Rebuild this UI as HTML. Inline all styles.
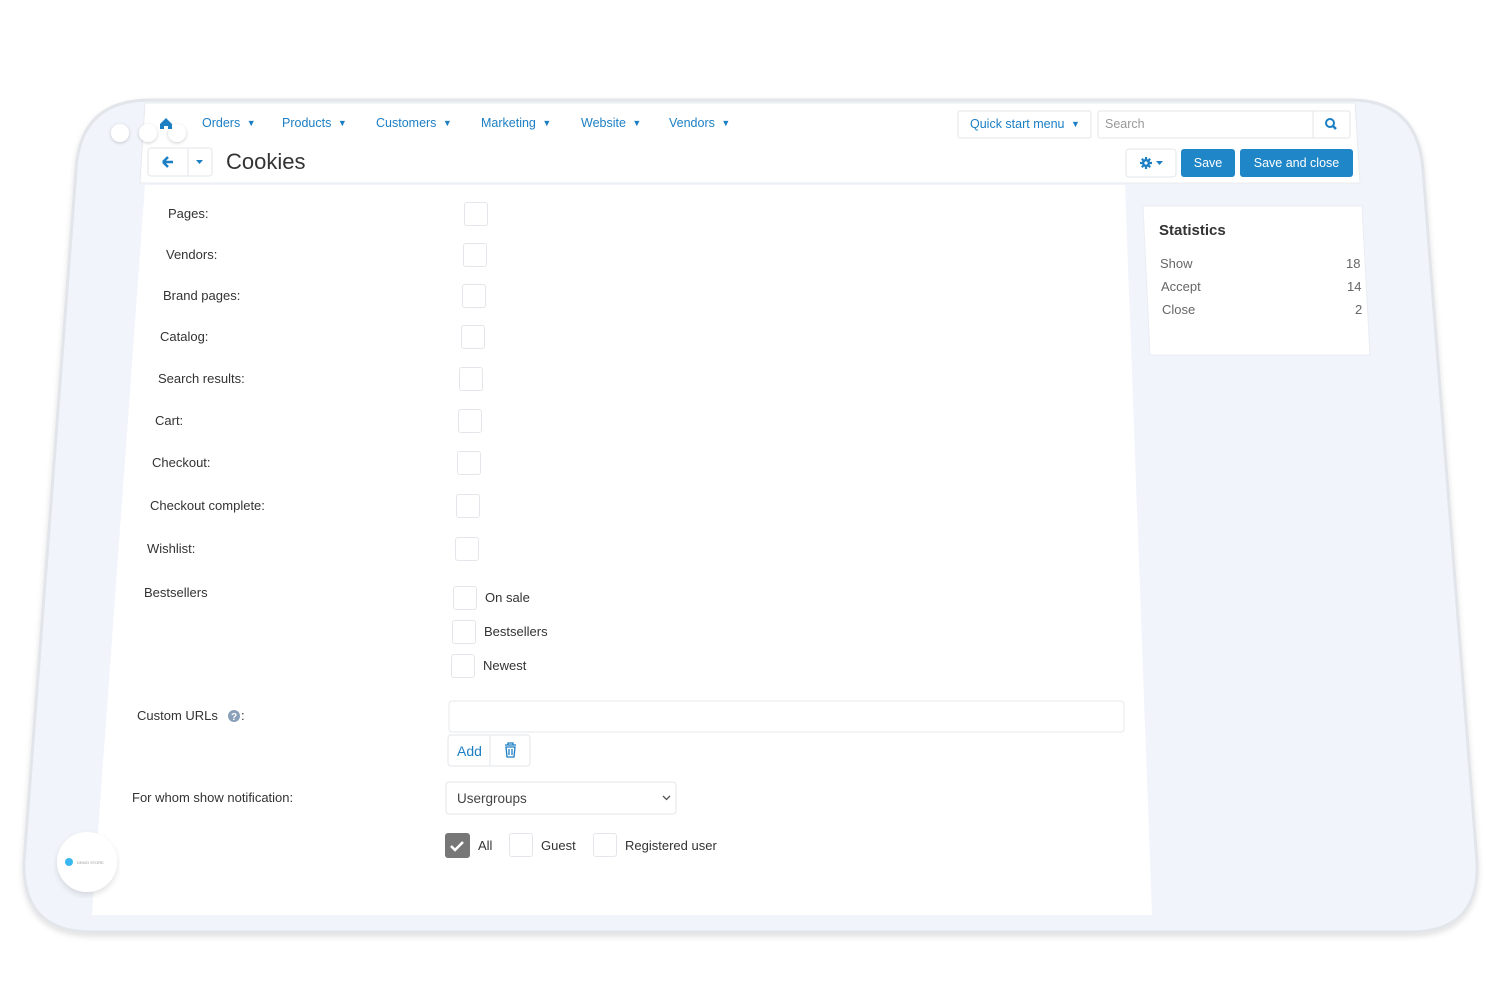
<!DOCTYPE html>
<html><head><style>
body{margin:0;width:1500px;height:1000px;background:#fff;position:relative;overflow:hidden;font-family:"Liberation Sans",sans-serif;}
.a{position:absolute;white-space:nowrap;}
.l{font-size:13px;color:#333;}
.n{font-size:12.5px;color:#1c7fc4;}
.n span{font-size:9px;position:relative;top:-1px;margin-left:3px}
.cb{position:absolute;width:22px;height:22px;border:1px solid #e3e6ea;border-radius:3px;background:#fff;}
.btn{position:absolute;background:#1f86c8;color:#fff;font-size:12.5px;text-align:center;border-radius:3px;}
</style></head><body>
<svg class="a" style="left:0;top:0" width="1500" height="1000">
<defs><filter id="s" x="-5%" y="-5%" width="110%" height="115%"><feDropShadow dx="0" dy="3" stdDeviation="3" flood-color="#000" flood-opacity="0.12"/></filter>
<filter id="s2" x="-50%" y="-50%" width="200%" height="200%"><feDropShadow dx="0" dy="1" stdDeviation="1.5" flood-color="#000" flood-opacity="0.2"/></filter></defs>
<path d="M150 100 L1350 100 Q1418 100 1423 170 L1477 862 Q1480 932 1410 932 L92 932 Q22 932 24 862 L76 170 Q80 100 150 100 Z" fill="#f1f4fb" stroke="#e2e5e9" stroke-width="3" filter="url(#s)"/>
<polygon points="145,185 1125,185 1152,915 92,915" fill="#fff"/>
<polygon points="145,103 1355,103 1360,183 140,183" fill="#fff" stroke="#e8ebef"/>
<polygon points="1143,206 1362,206 1370,355 1150,355" fill="#fff" stroke="#e9edf2"/>
<circle cx="120" cy="133" r="9" fill="#fff" filter="url(#s2)"/>
<circle cx="148" cy="133" r="9" fill="#fff" filter="url(#s2)"/>
<circle cx="177" cy="133" r="9" fill="#fff" filter="url(#s2)"/>
<circle cx="87" cy="862" r="30" fill="#fff" filter="url(#s)"/>
<circle cx="69" cy="862" r="4" fill="#3ab8ef"/>
<text x="77" y="864" font-size="4" fill="#999" font-family="Liberation Sans">DEMO STORE</text>
<rect x="148" y="148" width="64" height="28" rx="3" fill="#fff" stroke="#e3e6ea"/>
<line x1="188" y1="148" x2="188" y2="176" stroke="#e3e6ea"/>
<path d="M163 162 h10 M163 162 l5 -5 M163 162 l5 5" stroke="#1c7fc4" stroke-width="2.5" fill="none"/>
<path d="M196 160 h7 l-3.5 4z" fill="#1c7fc4"/>
<path d="M160 124 l6 -6 l6 6 v5 h-4 v-3 h-4 v3 h-4z" fill="#1c7fc4"/>
<rect x="958" y="111" width="133" height="27" rx="2" fill="#fff" stroke="#e3e6ea"/>
<rect x="1098" y="111" width="252" height="27" rx="2" fill="#fff" stroke="#e3e6ea"/>
<line x1="1313" y1="111" x2="1313" y2="138" stroke="#e3e6ea"/>
<circle cx="1330" cy="123" r="4" fill="none" stroke="#1c7fc4" stroke-width="2"/>
<path d="M1333 126 l3 3" stroke="#1c7fc4" stroke-width="2.5"/>
<rect x="1126" y="149" width="50" height="28" rx="3" fill="#fff" stroke="#e3e6ea"/>
<circle cx="1146" cy="163" r="4" fill="#1c7fc4"/>
<path d="M1146 157 v12 M1140 163 h12 M1141.8 158.8 l8.4 8.4 M1150.2 158.8 l-8.4 8.4" stroke="#1c7fc4" stroke-width="2.2"/>
<circle cx="1146" cy="163" r="1.6" fill="#fff"/>
<path d="M1156 161 h7 l-3.5 4z" fill="#1c7fc4"/>
<rect x="449" y="701" width="675" height="31" rx="3" fill="#fff" stroke="#e6e9ed"/>
<rect x="448" y="735" width="82" height="31" rx="3" fill="#fff" stroke="#e3e6ea"/>
<line x1="490" y1="735" x2="490" y2="766" stroke="#e3e6ea"/>
<path d="M505 745 h11 M508 745 v-2 h5 v2 M506 747 h9 l-1 10 h-7z M509 749 v6 M512 749 v6" stroke="#1c7fc4" stroke-width="1.3" fill="none"/>
<rect x="446" y="782" width="230" height="32" rx="3" fill="#fff" stroke="#e3e6ea"/>
<path d="M663 796 l3.5 3.5 l3.5 -3.5" stroke="#555" stroke-width="1.3" fill="none"/>
<rect x="445" y="833" width="25" height="25" rx="3" fill="#777"/>
<path d="M451 846 l4 4 l8 -8" stroke="#fff" stroke-width="2.5" fill="none"/>
<circle cx="234" cy="716" r="6" fill="#8aa0b8"/>
<text x="231" y="720" font-size="10" fill="#fff" font-weight="bold" font-family="Liberation Sans">?</text>
</svg>
<div class="a n" style="left:202px;top:116px">Orders <span>▼</span></div>
<div class="a n" style="left:282px;top:116px">Products <span>▼</span></div>
<div class="a n" style="left:376px;top:116px">Customers <span>▼</span></div>
<div class="a n" style="left:481px;top:116px">Marketing <span>▼</span></div>
<div class="a n" style="left:581px;top:116px">Website <span>▼</span></div>
<div class="a n" style="left:669px;top:116px">Vendors <span>▼</span></div>
<div class="a n" style="left:970px;top:117px">Quick start menu <span>▼</span></div>
<div class="a" style="left:1105px;top:117px;font-size:12.5px;color:#999">Search</div>
<div class="a" style="left:226px;top:149px;font-size:22px;color:#333">Cookies</div>
<div class="btn" style="left:1181px;top:149px;width:54px;height:28px;line-height:28px">Save</div>
<div class="btn" style="left:1240px;top:149px;width:113px;height:28px;line-height:28px">Save and close</div>
<div class="a" style="left:1159px;top:222px;font-size:15px;font-weight:bold;color:#333">Statistics</div>
<div class="a l" style="left:1160px;top:256px;color:#666">Show</div><div class="a l" style="left:1346px;top:256px;color:#666">18</div>
<div class="a l" style="left:1161px;top:279px;color:#666">Accept</div><div class="a l" style="left:1347px;top:279px;color:#666">14</div>
<div class="a l" style="left:1162px;top:302px;color:#666">Close</div><div class="a l" style="left:1355px;top:302px;color:#666">2</div>
<div class="a l" style="left:168px;top:206px">Pages:</div><div class="cb" style="left:464px;top:202px"></div>
<div class="a l" style="left:166px;top:247px">Vendors:</div><div class="cb" style="left:463px;top:243px"></div>
<div class="a l" style="left:163px;top:288px">Brand pages:</div><div class="cb" style="left:462px;top:284px"></div>
<div class="a l" style="left:160px;top:329px">Catalog:</div><div class="cb" style="left:461px;top:325px"></div>
<div class="a l" style="left:158px;top:371px">Search results:</div><div class="cb" style="left:459px;top:367px"></div>
<div class="a l" style="left:155px;top:413px">Cart:</div><div class="cb" style="left:458px;top:409px"></div>
<div class="a l" style="left:152px;top:455px">Checkout:</div><div class="cb" style="left:457px;top:451px"></div>
<div class="a l" style="left:150px;top:498px">Checkout complete:</div><div class="cb" style="left:456px;top:494px"></div>
<div class="a l" style="left:147px;top:541px">Wishlist:</div><div class="cb" style="left:455px;top:537px"></div>
<div class="a l" style="left:144px;top:585px">Bestsellers</div>
<div class="cb" style="left:453px;top:586px"></div><div class="a l" style="left:485px;top:590px">On sale</div>
<div class="cb" style="left:452px;top:620px"></div><div class="a l" style="left:484px;top:624px">Bestsellers</div>
<div class="cb" style="left:451px;top:654px"></div><div class="a l" style="left:483px;top:658px">Newest</div>
<div class="a l" style="left:137px;top:708px">Custom URLs</div><div class="a l" style="left:241px;top:708px">:</div>
<div class="a" style="left:457px;top:743px;font-size:14px;color:#1c7fc4">Add</div>
<div class="a l" style="left:132px;top:790px">For whom show notification:</div>
<div class="a" style="left:457px;top:791px;font-size:13.5px;color:#444">Usergroups</div>
<div class="a l" style="left:478px;top:838px">All</div>
<div class="cb" style="left:509px;top:833px"></div><div class="a l" style="left:541px;top:838px">Guest</div>
<div class="cb" style="left:593px;top:833px"></div><div class="a l" style="left:625px;top:838px">Registered user</div>
</body></html>
